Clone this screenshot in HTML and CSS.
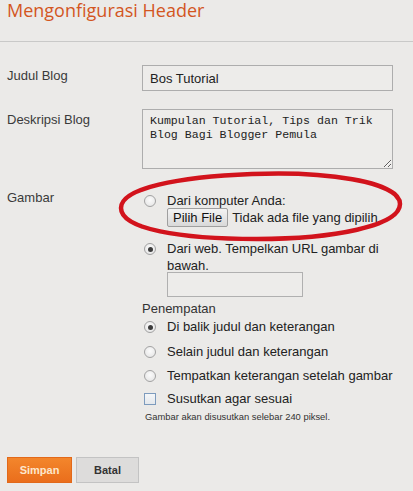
FILE: index.html
```html
<!DOCTYPE html>
<html lang="id">
<head>
<meta charset="utf-8">
<title>Mengonfigurasi Header</title>
<link rel="stylesheet" href="styles.css">
</head>
<body>
<div class="page">
  <div class="header">
    <h1 class="title">Mengonfigurasi Header</h1>
  </div>

  <div class="row row-first">
    <div class="label">Judul Blog</div>
    <div class="field"><input class="text-input" type="text" value="Bos Tutorial"></div>
  </div>

  <div class="row">
    <div class="label">Deskripsi Blog</div>
    <div class="field"><textarea class="text-area">Kumpulan Tutorial, Tips dan Trik Blog Bagi Blogger Pemula</textarea></div>
  </div>

  <div class="row">
    <div class="label">Gambar</div>
    <div class="field options">
      <div class="opt opt-source">
        <span class="radio"></span>
        <div class="opt-body">
          <div class="opt-text">Dari komputer Anda:</div>
          <div class="file-row">
            <span class="file-btn">Pilih File</span>
            <span class="file-name">Tidak ada file yang dipilih</span>
          </div>
        </div>
      </div>
      <div class="opt opt-web">
        <span class="radio checked"></span>
        <div class="opt-body">
          <div class="opt-text">Dari web. Tempelkan URL gambar di bawah.</div>
          <input class="url-input" type="text" value="">
        </div>
      </div>

      <div class="sub-label">Penempatan</div>
      <div class="placement">
        <div class="opt">
          <span class="radio checked"></span>
          <div class="opt-text">Di balik judul dan keterangan</div>
        </div>
        <div class="opt">
          <span class="radio"></span>
          <div class="opt-text">Selain judul dan keterangan</div>
        </div>
        <div class="opt">
          <span class="radio"></span>
          <div class="opt-text">Tempatkan keterangan setelah gambar</div>
        </div>
        <div class="opt opt-check">
          <span class="checkbox"></span>
          <div class="opt-text">Susutkan agar sesuai</div>
        </div>
      </div>
      <div class="note">Gambar akan disusutkan selebar 240 piksel.</div>
    </div>
  </div>

  <div class="actions">
    <button class="btn btn-save" type="button">Simpan</button>
    <button class="btn btn-cancel" type="button">Batal</button>
  </div>

  <svg class="marker" width="413" height="491" viewBox="0 0 413 491" aria-hidden="true">
    <path d="M252 174 C322 171 400 181 400 204 C400 226 333 239 257 239 C180 239 121 229 121 208 C121 188 178 177 252 174 Z" fill="none" stroke="#d2131c" stroke-width="4.5"/>
  </svg>
</div>
</body>
</html>
```

FILE: styles.css
```css
html, body {
  margin: 0;
  padding: 0;
  background: #ebeae8;
}

.page {
  position: relative;
  width: 413px;
  height: 491px;
  overflow: hidden;
  font-family: "Liberation Sans", Arial, sans-serif;
  font-size: 13px;
  color: #333;
}

.header {
  height: 41px;
  border-bottom: 1px solid #c9c9c8;
  padding-left: 7px;
}

.title {
  margin: 0;
  padding-top: 1px;
  font-family: "Open Sans", sans-serif;
  font-weight: 400;
  font-size: 18px;
  line-height: 18px;
  color: #d3561f;
}

.row {
  display: grid;
  grid-template-columns: 135px 251px;
  padding-left: 7px;
  margin-top: 18px;
}

.row-first {
  margin-top: 23px;
}

.label {
  padding-top: 3px;
  line-height: 16px;
  color: #3a3a3a;
}

.text-input {
  box-sizing: border-box;
  display: block;
  width: 251px;
  height: 26px;
  margin: 0;
  padding: 0 7px;
  border: 1px solid #adadad;
  background: #edecea;
  font-family: "Liberation Sans", Arial, sans-serif;
  font-size: 13px;
  color: #222;
  outline: none;
}

.text-area {
  box-sizing: border-box;
  display: block;
  width: 251px;
  height: 60px;
  margin: 0;
  padding: 4px 7px;
  border: 1px solid #adadad;
  background: #edecea;
  font-family: "Liberation Mono", "Courier New", monospace;
  font-size: 11.6px;
  line-height: 13.5px;
  color: #222;
  resize: both;
  outline: none;
}

.options {
  padding-top: 5px;
}

.opt {
  display: flex;
  align-items: flex-start;
  padding-left: 2px;
}

.opt-text {
  line-height: 17px;
  color: #222;
}

.opt-body {
  display: flex;
  flex-direction: column;
  align-items: flex-start;
}

.radio {
  flex: none;
  box-sizing: border-box;
  width: 12px;
  height: 12px;
  margin: 3px 11px 0 0;
  border: 1px solid #a2a2a2;
  border-radius: 50%;
  background: radial-gradient(circle at 50% 40%, #fbfbfb, #e2e2e2);
  position: relative;
}

.radio.checked::after {
  content: "";
  position: absolute;
  left: 2.5px;
  top: 2.5px;
  width: 5px;
  height: 5px;
  border-radius: 50%;
  background: #3c3c3c;
}

.checkbox {
  flex: none;
  box-sizing: border-box;
  width: 12px;
  height: 12px;
  margin: 3px 11px 0 0;
  border: 1px solid #7d9bbd;
  background: linear-gradient(#f4f6f8, #e4e8ec);
}

.file-row {
  display: flex;
  align-items: center;
  gap: 4px;
  margin-top: -1px;
}

.file-btn {
  box-sizing: border-box;
  height: 19px;
  padding: 0 5px;
  line-height: 17px;
  border: 1px solid #9f9f9f;
  border-radius: 2px;
  background: linear-gradient(#f3f3f3, #d9d9d9);
  color: #111;
}

.file-name {
  color: #222;
  white-space: nowrap;
}

.opt-web {
  margin-top: 13px;
}

.url-input {
  box-sizing: border-box;
  display: block;
  width: 136px;
  height: 25px;
  margin: -2px 0 0;
  padding: 0 5px;
  border: 1px solid #b0b0b0;
  background: #edecea;
  outline: none;
}

.sub-label {
  margin-top: 3px;
  line-height: 17px;
  color: #333;
}

.placement {
  display: flex;
  flex-direction: column;
  gap: 7.5px;
  margin-top: 1px;
}

.opt-check {
  margin-top: -1.5px;
}

.note {
  margin-top: 3px;
  padding-left: 3px;
  font-size: 9.4px;
  line-height: 14px;
  color: #333;
}

.actions {
  display: flex;
  gap: 4px;
  padding-left: 7px;
  position: absolute;
  left: 0;
  top: 457px;
}

.btn {
  box-sizing: border-box;
  height: 26px;
  margin: 0;
  padding: 0;
  font-family: "Liberation Sans", Arial, sans-serif;
  font-size: 11px;
  font-weight: 700;
  cursor: pointer;
}

.btn-save {
  width: 65px;
  border: 1px solid #e2691a;
  background: linear-gradient(#f3862c, #ea6e1c);
  color: #fde7cc;
}

.btn-cancel {
  width: 63px;
  border: 1px solid #c3c3c3;
  background: #dddcdb;
  color: #333;
}

.marker {
  position: absolute;
  left: 0;
  top: 0;
  pointer-events: none;
}
```
